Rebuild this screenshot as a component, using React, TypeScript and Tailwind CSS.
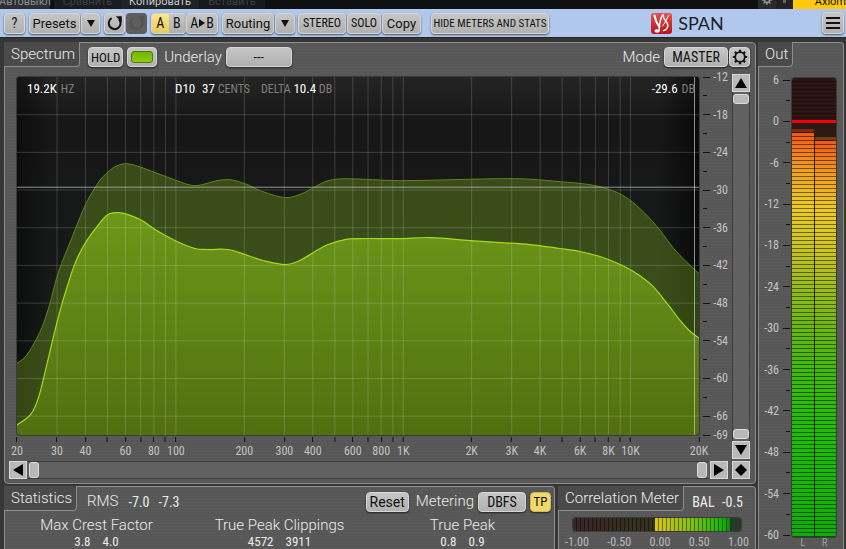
import type { ButtonHTMLAttributes, ReactNode } from "react";

type Point = [number, number];

const PLOT_W = 682;
const PLOT_H = 359;

const peakCurve: Point[] = [
  [0, 287], [8, 281], [16, 269], [25, 251], [33, 227], [41, 197], [55, 161], [68, 129], [78, 111], [86, 100],
  [98, 90], [111, 87], [136, 95], [160, 104], [178, 109], [200, 104], [213, 103], [228, 107],
  [246, 115], [269, 121], [285, 117], [298, 110], [311, 104], [328, 102], [383, 104], [433, 103], [503, 102],
  [543, 105], [573, 108], [593, 113], [608, 120], [623, 132], [640, 150], [656, 171], [668, 184], [682, 197],
];

const rmsCurve: Point[] = [
  [0, 349], [10, 342], [16, 335], [22, 320], [29, 292], [38, 254], [46, 224], [58, 187], [68, 167], [80, 150],
  [91, 138], [101, 136], [111, 138], [125, 144], [138, 153], [160, 165], [178, 172], [190, 173], [211, 173], [228, 178],
  [246, 184], [269, 188], [283, 184], [298, 175], [311, 168], [328, 163], [343, 162], [383, 162], [413, 161],
  [453, 164], [483, 166], [513, 168], [543, 172], [563, 175], [583, 180], [601, 187], [618, 196], [635, 209], [650, 227],
  [663, 244], [673, 255], [682, 262],
];

const gridFreqs = [
  30, 40, 50, 60, 70, 80, 90, 100, 200, 300, 400, 500, 600, 700, 800, 900, 1000, 2000, 3000, 4000, 5000, 6000, 7000,
  8000, 9000, 10000,
];

const freqLabels: Record<number, string> = {
  20: "20", 30: "30", 40: "40", 60: "60", 80: "80", 100: "100", 200: "200", 300: "300", 400: "400", 600: "600",
  800: "800", 1000: "1K", 2000: "2K", 3000: "3K", 4000: "4K", 6000: "6K", 8000: "8K", 10000: "10K", 20000: "20K",
};

const dbGrid = [-18, -24, -30, -36, -42, -48, -54, -60, -66];
const dbTicks = [-12, -15, -18, -21, -24, -27, -30, -33, -36, -39, -42, -45, -48, -51, -54, -57, -60, -63, -66, -69];
const outTicks = Array.from({ length: 23 }, (_, i) => 6 - i * 3);

const freqPos = (f: number) => Math.log(f / 20) / Math.log(1000);
const dbPos = (db: number) => (-12 - db) / 57;

// smooth line through all points, slopes scaled to the x distance
function curvePath(pts: Point[]) {
  const slope = (i: number) => {
    const a = pts[Math.max(i - 1, 0)];
    const b = pts[Math.min(i + 1, pts.length - 1)];
    return (b[1] - a[1]) / (b[0] - a[0]);
  };
  let d = `M${pts[0][0]} ${pts[0][1]}`;
  for (let i = 0; i < pts.length - 1; i++) {
    const [x1, y1] = pts[i];
    const [x2, y2] = pts[i + 1];
    const h = (x2 - x1) / 3;
    d += `C${x1 + h} ${y1 + h * slope(i)} ${x2 - h} ${y2 - h * slope(i + 1)} ${x2} ${y2}`;
  }
  return d;
}

const face =
  "flex items-center justify-center shrink-0 border border-[#d6d6d6] bg-linear-to-b from-[#c6c6c6] to-[#b0b0b0] font-normal text-[#111] shadow-[0_1px_2px_rgba(0,0,0,0.6)]";
const condensed = "font-['Roboto_Condensed',Roboto,sans-serif]";
const pick = `${face} ${condensed} appearance-none rounded-[4px] h-5 text-[14px] leading-none text-center [text-align-last:center]`;

function Button({ className = "", ...props }: ButtonHTMLAttributes<HTMLButtonElement>) {
  return <button type="button" className={`${face} rounded-[4px] whitespace-nowrap leading-none ${className}`} {...props} />;
}

function DownIcon() {
  return (
    <svg viewBox="0 0 8 7" className="h-[7px] w-2">
      <path d="M0 0H8L4 7Z" fill="#111" />
    </svg>
  );
}

function TurnIcon() {
  return (
    <svg viewBox="0 0 16 16" className="size-4 shrink-0">
      <path d="M4.6 3.2A5.9 5.9 0 1 0 12 4.2" fill="none" stroke="currentColor" strokeWidth="2" />
      <path d="M8.8 1.2H14.8V7.2L12.6 5Z" fill="currentColor" />
    </svg>
  );
}

function GearIcon() {
  return (
    <svg viewBox="0 0 16 16" className="size-4 shrink-0" fill="none" stroke="#111">
      <circle cx="8" cy="8" r="4.8" strokeWidth="1.8" />
      <path
        d="M8 0.8V3M8 13V15.2M0.8 8H3M13 8H15.2M2.9 2.9L4.5 4.5M11.5 11.5L13.1 13.1M13.1 2.9L11.5 4.5M4.5 11.5L2.9 13.1"
        strokeWidth="2.2"
      />
    </svg>
  );
}

function ScrollButton({ label, d }: { label: string; d: string }) {
  return (
    <button
      type="button"
      aria-label={label}
      className="flex size-[18px] shrink-0 items-center justify-center border border-[#d8d8d8] bg-[#b9b9b9]"
    >
      <svg viewBox="0 0 14 14" className="size-[14px]">
        <path d={d} fill="#050505" />
      </svg>
    </button>
  );
}

const knob = "rounded-[3px] border border-[#dcdcdc] bg-[#b8b8b8]";
const panelSurface =
  "border border-[#8c8c8c] rounded-[4px] bg-[#575757] bg-[repeating-linear-gradient(180deg,rgba(255,255,255,0.02)_0_1px,transparent_1px_3px)]";

function Tab({ children }: { children: ReactNode }) {
  return (
    <h2 className="-ml-px -mt-px flex h-[25px] shrink-0 items-center self-start rounded-br-[4px] border-b border-r border-[#8c8c8c] bg-[#4a4a4a] pl-[7px] pr-1 text-[15px] leading-none">
      {children}
    </h2>
  );
}

function HostBar() {
  return (
    <div className="flex h-[9px] shrink-0 items-end overflow-hidden bg-[#0e1011] text-[11px] leading-[15px] text-[#8b8f92]">
      <div className="flex w-[50px] justify-center bg-[#2c3033]">Автовыкл</div>
      <div className="ml-1 flex w-[67px] justify-center bg-[#191c1e] text-[#3c4043]">Сравнить</div>
      <div className="flex w-[78px] justify-center bg-[#202325] text-[#c9c9c9]">Копировать</div>
      <div className="flex w-[66px] justify-center bg-[#16191b] text-[#3c4043]">Вставить</div>
      <div className="ml-auto flex h-[9px] w-[18px] items-end justify-center bg-[#2a2a2a] pb-1">
        <svg viewBox="0 0 10 10" className="size-[10px]" fill="none" stroke="#8b8b8b">
          <circle cx="5" cy="5" r="2.6" strokeWidth="2" />
          <path d="M5 0V10M0 5H10M1.5 1.5L8.5 8.5M8.5 1.5L1.5 8.5" strokeWidth="1.4" strokeDasharray="2 6" />
        </svg>
      </div>
      <div className="flex h-[9px] w-[17px] justify-center bg-[#222]">
        <span className="size-[3px] bg-[#666]" />
      </div>
      <div className="flex h-[9px] w-[53px] items-end justify-end overflow-hidden bg-[#ffc90e] text-[#111]">Axiom</div>
    </div>
  );
}

function Toolbar() {
  return (
    <header className="flex h-7 shrink-0 items-center bg-[#b1c8ec] px-1 text-[14px]">
      <Button className={`${condensed} h-[21px] w-[21px]`}>?</Button>
      <Button className="ml-1 h-[21px] w-[51px] text-[13px]">Presets</Button>
      <Button aria-label="Preset list" className="ml-px h-[21px] w-[19px]">
        <DownIcon />
      </Button>
      <Button aria-label="Undo" className="ml-1 h-[21px] w-[21px]">
        <TurnIcon />
      </Button>
      <button
        type="button"
        disabled
        aria-label="Redo"
        className="ml-px flex h-[21px] w-[21px] items-center justify-center rounded-[4px] bg-[#5e5e5e] text-[#525252]"
      >
        <TurnIcon />
      </button>
      <div className={`${face} ${condensed} ml-1 h-[21px] w-[35px] overflow-hidden rounded-[4px]`}>
        <button type="button" className="h-full flex-1 bg-linear-to-b from-[#fbe68c] to-[#e9cb5a] leading-none">
          A
        </button>
        <button type="button" className="h-full flex-1 leading-none">
          B
        </button>
      </div>
      <Button aria-label="Copy A to B" className={`${condensed} h-[21px] w-8 gap-px`}>
        A
        <svg viewBox="0 0 6 8" className="h-2 w-[6px]">
          <path d="M0 0L6 4L0 8Z" fill="#111" />
        </svg>
        B
      </Button>
      <Button className="ml-1 h-[21px] w-[52px] text-[13px]">Routing</Button>
      <Button aria-label="Routing list" className="ml-px h-[21px] w-5">
        <DownIcon />
      </Button>
      <Button className={`${condensed} ml-[3px] h-[21px] w-[48px] text-[12px]`}>STEREO</Button>
      <Button className={`${condensed} ml-px h-[21px] w-[34px] text-[12px]`}>SOLO</Button>
      <Button className="ml-px h-[21px] w-[39px] text-[13px]">Copy</Button>
      <Button className={`${condensed} ml-[10px] h-[21px] w-[118px] text-[11px]`}>HIDE METERS AND STATS</Button>
      <div className="flex flex-1 items-center justify-center gap-[6px]">
        <svg viewBox="0 0 21 21" className="ml-1 size-[21px]">
          <defs>
            <linearGradient id="logo" x1="0" y1="0" x2="0" y2="1">
              <stop offset="0" stopColor="#e64f4f" />
              <stop offset="1" stopColor="#b3161a" />
            </linearGradient>
          </defs>
          <rect width="21" height="21" rx="3" fill="url(#logo)" />
          <g fill="none" stroke="#fff" strokeLinecap="round">
            <path d="M3.5 2.5C4.2 7 5.8 10.5 8.4 14" strokeWidth="2" />
            <path d="M12 1.5C9 5 8.4 10 8 18" strokeWidth="1.4" />
            <path d="M12.4 1.8C11.4 7.5 18.2 9 16.8 13.5C16 16 14 17.4 12.4 17.6" strokeWidth="1.3" />
            <path d="M18 2C15.6 4.5 15.4 9 11.4 13" strokeWidth="1" />
          </g>
          <ellipse cx="6" cy="18" rx="2.6" ry="1.8" fill="#fff" />
        </svg>
        <h1 className="font-[Lato,sans-serif] text-[18px] font-normal leading-none text-[#1b1f27]">SPAN</h1>
      </div>
      <Button aria-label="Menu" className="-mr-[2px] h-[22px] w-[22px]">
        <svg viewBox="0 0 14 12" className="h-3 w-[14px]">
          <path d="M0 1H14M0 6H14M0 11H14" stroke="#111" strokeWidth="2" />
        </svg>
      </Button>
    </header>
  );
}

function Plot() {
  const peak = curvePath(peakCurve);
  const rms = curvePath(rmsCurve);
  return (
    <div className="relative min-h-0 min-w-0 overflow-hidden rounded-[3px] bg-[#161616] shadow-[0_0_0_1px_#3a3a3a]">
      <svg viewBox={`0 0 ${PLOT_W} ${PLOT_H}`} preserveAspectRatio="none" className="absolute inset-0 size-full">
        <defs>
          <linearGradient id="rms" x1="0" y1="0" x2="0" y2="1">
            <stop offset="0" stopColor="#6d971a" />
            <stop offset="1" stopColor="#506f0f" />
          </linearGradient>
          <linearGradient id="edge" x1="0" y1="0" x2="1" y2="0">
            <stop offset="0" stopColor="#000" stopOpacity="0.45" />
            <stop offset="0.05" stopColor="#000" stopOpacity="0" />
            <stop offset="0.94" stopColor="#000" stopOpacity="0" />
            <stop offset="1" stopColor="#000" stopOpacity="0.6" />
          </linearGradient>
          <linearGradient id="glow" x1="0" y1="0" x2="0" y2="1">
            <stop offset="0" stopColor="#242424" />
            <stop offset="0.12" stopColor="#171717" />
            <stop offset="1" stopColor="#181a1a" />
          </linearGradient>
        </defs>
        <rect width={PLOT_W} height={PLOT_H} fill="url(#glow)" />
        <rect width={PLOT_W} height={PLOT_H} fill="url(#edge)" />
        <path d={`${peak}V${PLOT_H}H0Z`} fill="#6f9c1c" fillOpacity="0.4" />
        <path d={`${rms}V${PLOT_H}H0Z`} fill="url(#rms)" />
        <g stroke="#fff" strokeOpacity="0.17" shapeRendering="crispEdges">
          {gridFreqs.map((f) => {
            const x = freqPos(f) * PLOT_W;
            return <line key={f} x1={x} x2={x} y1="0" y2={PLOT_H} />;
          })}
          {dbGrid.map((db) => {
            const y = dbPos(db) * PLOT_H;
            return <line key={db} x1="0" x2={PLOT_W} y1={y} y2={y} />;
          })}
        </g>
        <path d={peak} fill="none" stroke="#5f8518" />
        <path d={rms} fill="none" stroke="#a2dc1c" strokeWidth="1.2" />
        <path
          d={`M0 110.5H${PLOT_W}M677.5 0V${PLOT_H}`}
          stroke="#c8c8c8"
          strokeOpacity="0.7"
          shapeRendering="crispEdges"
        />
      </svg>
      <div className={`${condensed} relative flex pl-[10px] pr-1 pt-1 text-[12px] font-normal leading-4 text-[#7f7f7f]`}>
        <p className="w-[148px]">
          <span className="pr-1 text-[13px] text-white">19.2K</span>HZ
        </p>
        <p className="w-[86px] whitespace-nowrap">
          <span className="pr-1 text-[13px] text-white">D10</span> <span className="text-[13px] text-white">37</span> CENTS
        </p>
        <p className="whitespace-nowrap">
          DELTA <span className="text-[13px] text-white">10.4</span> DB
        </p>
        <p className="ml-auto">
          <span className="pr-1 text-[13px] text-white">-29.6</span>DB
        </p>
      </div>
    </div>
  );
}

function DbAxis() {
  return (
    <div className={`${condensed} relative text-[12px] font-normal leading-none text-[#c4c4c4]`}>
      {dbTicks.map((db) => {
        const major = db % 6 === 0 || db === -69;
        return (
          <div
            key={db}
            className="absolute inset-x-0 flex h-3 -translate-y-1/2 items-center justify-between"
            style={{ top: `${dbPos(db) * 100}%` }}
          >
            <span className={major ? "h-px w-[7px] bg-[#111]" : "h-px w-1 bg-[#111]"} />
            {major && <span>{db}</span>}
          </div>
        );
      })}
    </div>
  );
}

function FreqAxis() {
  return (
    <div className={`${condensed} relative text-[12px] font-normal leading-none text-[#c4c4c4]`}>
      {[20, ...gridFreqs, 20000].map((f) => (
        <div
          key={f}
          className="absolute top-[2px] flex -translate-x-1/2 flex-col items-center gap-[3px]"
          style={{ left: `${freqPos(f) * 100}%` }}
        >
          <span className="h-[5px] w-px bg-[#111]" />
          {freqLabels[f] && <span>{freqLabels[f]}</span>}
        </div>
      ))}
    </div>
  );
}

function Spectrum() {
  return (
    <section className={`${panelSurface} flex min-h-0 flex-1 flex-col`}>
      <div className="flex h-[34px] shrink-0 pr-[5px] text-[15px]">
        <Tab>Spectrum</Tab>
        <div className="flex flex-1 items-center pb-[6px]">
          <Button className={`${condensed} ml-2 h-5 w-[35px] text-[13px]`}>HOLD</Button>
          <Button aria-label="Toggle spectrum" className="ml-1 h-5 w-[30px]">
            <span className="h-3 w-[22px] rounded-[3px] border border-[#4f7a00] bg-linear-to-b from-[#72b400] to-[#8ecb10]" />
          </Button>
          <label htmlFor="underlay" className="ml-[7px] leading-none">
            Underlay
          </label>
          <select id="underlay" className={`${pick} ml-1 w-[66px]`}>
            <option>---</option>
          </select>
          <label htmlFor="mode" className="ml-auto leading-none">
            Mode
          </label>
          <select id="mode" className={`${pick} ml-1 w-16`}>
            <option>MASTER</option>
          </select>
          <Button aria-label="Mode settings" className="ml-px h-5 w-[21px]">
            <GearIcon />
          </Button>
        </div>
      </div>
      <div className="grid min-h-0 flex-1 grid-cols-[minmax(0,1fr)_25px_18px] grid-rows-[minmax(0,1fr)_24px] gap-x-1 pl-3 pr-[5px]">
        <Plot />
        <DbAxis />
        <div className="row-span-2 -mt-[3px] flex flex-col items-center">
          <ScrollButton label="Scroll up" d="M7 2L13 12H1Z" />
          <div className="flex w-[18px] flex-1 flex-col justify-between border-x border-[#3c3c3c] bg-[#616161] py-[2px]">
            <span className={`${knob} h-[10px]`} />
            <span className={`${knob} h-[10px]`} />
          </div>
          <ScrollButton label="Scroll down" d="M7 12L1 2H13Z" />
        </div>
        <FreqAxis />
      </div>
      <div className="flex h-6 shrink-0 items-start pl-1 pr-[5px] pt-[2px]">
        <ScrollButton label="Scroll left" d="M2 7L12 1V13Z" />
        <div className="mr-px flex h-[18px] flex-1 items-center justify-between border-y border-[#3c3c3c] bg-[#616161] px-[2px]">
          <span className={`${knob} h-4 w-[10px]`} />
          <span className={`${knob} h-4 w-[10px]`} />
        </div>
        <ScrollButton label="Scroll right" d="M12 7L2 13V1Z" />
        <span className="w-1" />
        <ScrollButton label="Reset view" d="M7 1L13 7L7 13L1 7Z" />
      </div>
    </section>
  );
}

const stats = [
  { name: "Max Crest Factor", left: "3.8", right: "4.0" },
  { name: "True Peak Clippings", left: "4572", right: "3911" },
  { name: "True Peak", left: "0.8", right: "0.9" },
];

function Statistics() {
  return (
    <section className={`${panelSurface} min-w-0 flex-1 rounded-b-none border-b-0`}>
      <div className="flex h-[29px] text-[15px]">
        <Tab>Statistics</Tab>
        <div className="flex flex-1 items-center pr-[3px]">
          <span className="ml-[10px] leading-none">RMS</span>
          <span className={`${condensed} ml-[10px] w-[30px] text-[14px] leading-none font-normal`}>-7.0</span>
          <span className={`${condensed} text-[14px] leading-none font-normal`}>-7.3</span>
          <Button className="ml-auto h-5 w-[43px] text-[14px]">Reset</Button>
          <label htmlFor="metering" className="ml-[7px] leading-none">
            Metering
          </label>
          <select id="metering" className={`${pick} ml-1 w-12`}>
            <option>DBFS</option>
          </select>
          <button
            type="button"
            className={`${condensed} ml-1 h-5 w-[21px] rounded-[4px] border border-[#cdb765] bg-[#f2d868] text-[13px] leading-none font-normal text-[#111] shadow-[0_1px_2px_rgba(0,0,0,0.6)]`}
          >
            TP
          </button>
        </div>
      </div>
      <dl className="grid grid-cols-3 text-center">
        {stats.map((s) => (
          <div key={s.name}>
            <dt className="text-[15px] leading-[18px] whitespace-nowrap">{s.name}</dt>
            <dd className={`${condensed} flex justify-center gap-3 text-[13px] leading-[15px] font-normal`}>
              <span>{s.left}</span>
              <span>{s.right}</span>
            </dd>
          </div>
        ))}
      </dl>
    </section>
  );
}

function Correlation() {
  return (
    <section className={`${panelSurface} w-[198px] shrink-0 rounded-b-none border-b-0`}>
      <div className="flex h-[31px]">
        <Tab>Correlation Meter</Tab>
        <p className={`${condensed} flex flex-1 items-center justify-between pl-2 pr-3 text-[14px] font-normal`}>
          <span>BAL</span>
          <span>-0.5</span>
        </p>
      </div>
      <div className="mr-[14px] ml-[14px] flex h-[13px] overflow-hidden rounded-[3px] bg-linear-to-r from-[#3a2525] via-[#33331f] to-[#263a28] shadow-[0_0_0_1px_#3a3a3a]">
        <div className="flex-1 bg-[repeating-linear-gradient(90deg,transparent_0_3px,rgba(0,0,0,0.45)_3px_4px)]" />
        <div className="w-[76px] bg-[repeating-linear-gradient(90deg,transparent_0_3px,rgba(0,0,0,0.45)_3px_4px),linear-gradient(90deg,#dcc41a,#7fc010_50%,#14b40a_90%,#157a10)]" />
        <div className="w-[10px]" />
      </div>
      <div className={`${condensed} flex justify-between px-[6px] pt-[5px] text-[12px] leading-none font-normal text-[#bcbcbc]`}>
        <span>-1.00</span>
        <span>-0.50</span>
        <span>0.00</span>
        <span>0.50</span>
        <span>1.00</span>
      </div>
    </section>
  );
}

// cells repeat every 4px, red only at the very top of the lit range
const barFill =
  "bg-[repeating-linear-gradient(180deg,transparent_0_3px,rgba(0,0,0,0.5)_3px_4px),linear-gradient(180deg,#f05818,#f0a020_9%,#ecca28_18%,#ccc420_28%,#98bc18_38%,#68b810_48%,#40b80c_59%,#20bc08_75%,#10ac08)]";

function OutMeter() {
  return (
    <section className={`${panelSurface} flex w-[86px] shrink-0 flex-col rounded-b-none border-b-0`}>
      <div className="flex h-[35px] shrink-0">
        <Tab>Out</Tab>
      </div>
      <div className="grid min-h-0 flex-1 grid-cols-[29px_44px] gap-x-[2px] pl-[2px]">
        <div className={`${condensed} relative my-[2px] text-[12px] font-normal leading-none text-[#c4c4c4]`}>
          {outTicks.map((db, i) => (
            <div
              key={db}
              className="absolute inset-x-0 flex h-3 -translate-y-1/2 items-center justify-end gap-1"
              style={{ top: `${(i / 22) * 100}%` }}
            >
              {i % 2 === 0 && <span>{db}</span>}
              <span className={i % 2 === 0 ? "h-px w-[7px] bg-[#111]" : "h-px w-1 bg-[#111]"} />
            </div>
          ))}
        </div>
        <div className="relative flex flex-col overflow-hidden rounded-[3px] bg-[#2d1514] shadow-[0_0_0_1px_#3a3a3a]">
          <div className="h-[42px] shrink-0 bg-[repeating-linear-gradient(180deg,transparent_0_3px,rgba(0,0,0,0.35)_3px_4px)]" />
          <div className="h-[3px] shrink-0 bg-[#f80000]" />
          <div className="flex flex-1 gap-px bg-[#2c1a12]">
            <div className="flex flex-1 flex-col pt-[6px]">
              <div className="h-[3px] bg-[#7a2c14]" />
              <div className={`mt-px flex-1 ${barFill}`} />
            </div>
            <div className="flex flex-1 flex-col pt-[14px]">
              <div className="h-[3px] bg-[#7a3c14]" />
              <div className={`mt-px flex-1 ${barFill}`} />
            </div>
          </div>
        </div>
      </div>
      <div className={`${condensed} ml-[33px] flex h-3 w-11 shrink-0 items-center justify-around text-[10px] leading-3 text-[#c6c6c6]`}>
        <span>L</span>
        <span>R</span>
      </div>
    </section>
  );
}

export default function App() {
  return (
    <div className="flex h-screen flex-col overflow-hidden bg-[#303030] font-[Roboto,'Liberation_Sans',sans-serif]">
      <HostBar />
      <Toolbar />
      <main className="flex min-h-0 flex-1 gap-[2px] border-t border-[#222] bg-[#363636] pt-1 pl-1 pr-[2px] font-light text-[#ececec]">
        <div className="flex min-w-0 flex-1 flex-col gap-[2px]">
          <Spectrum />
          <div className="flex h-[63px] shrink-0 gap-[3px]">
            <Statistics />
            <Correlation />
          </div>
        </div>
        <OutMeter />
      </main>
    </div>
  );
}
